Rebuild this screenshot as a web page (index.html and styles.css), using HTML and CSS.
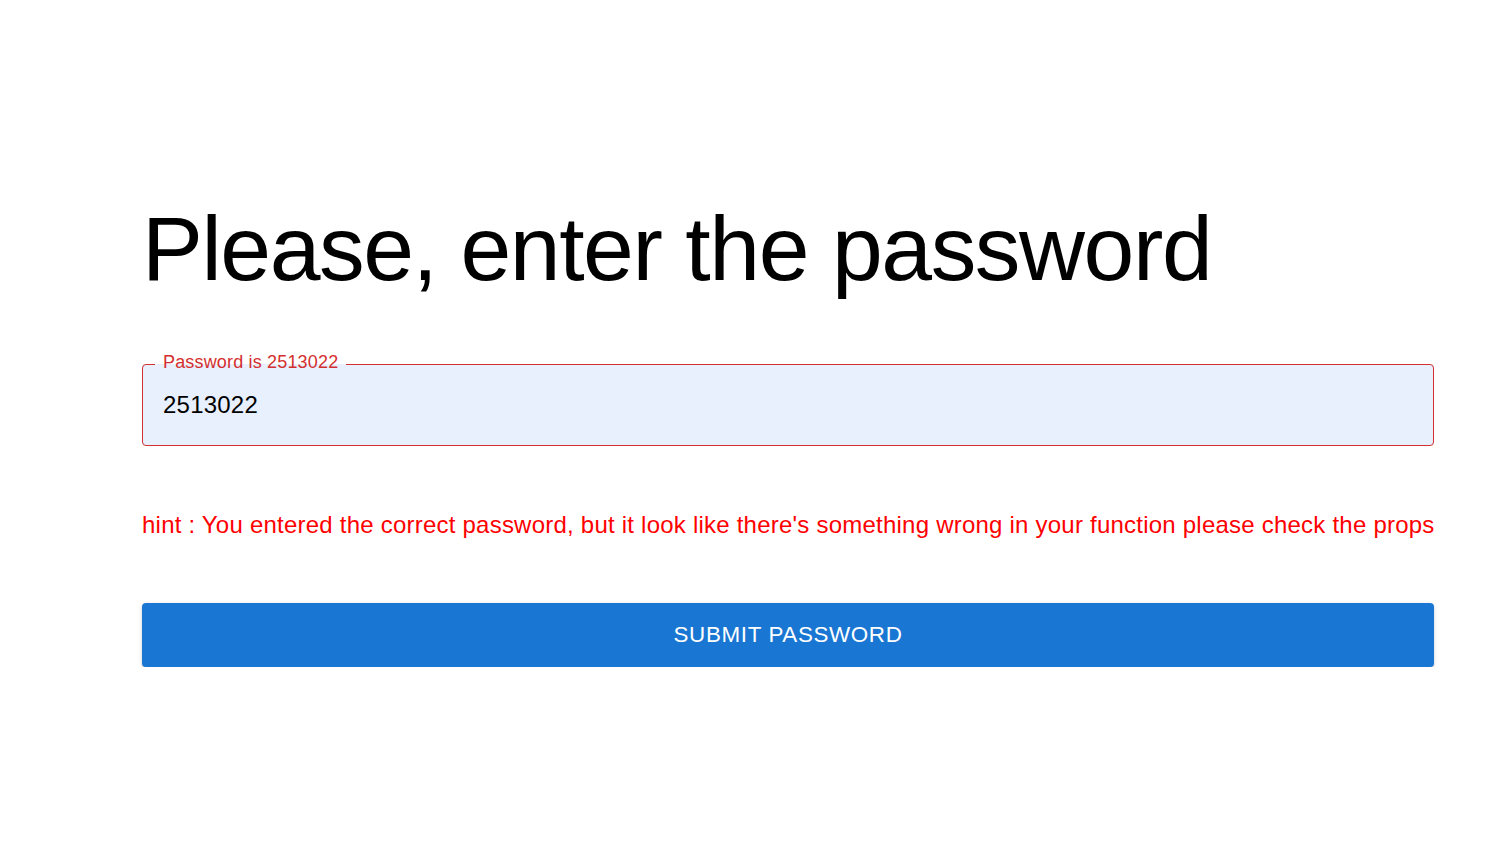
FILE: index.html
```html
<!DOCTYPE html>
<html lang="en">
<head>
<meta charset="utf-8">
<title>Password</title>
<link rel="stylesheet" href="styles.css">
</head>
<body>
<main class="page">
  <h1 class="title">Please, enter the password</h1>
  <fieldset class="field">
    <legend class="field-label">Password is 2513022</legend>
    <input class="field-input" type="text" value="2513022" aria-label="Password">
  </fieldset>
  <p class="hint">hint : You entered the correct password, but it look like there's something wrong in your function please check the props</p>
  <button class="submit" type="button">SUBMIT PASSWORD</button>
</main>
</body>
</html>
```

FILE: styles.css
```css
html, body {
  margin: 0;
  padding: 0;
  background: #ffffff;
}

body {
  font-family: "Liberation Sans", Arial, sans-serif;
  color: #000000;
}

.page {
  display: flex;
  flex-direction: column;
  padding: 195px 73px 0 142px;
}

.title {
  margin: 0;
  font-size: 91.3px;
  line-height: 107px;
  font-weight: 400;
  letter-spacing: -0.01562em;
  color: #000;
}

.field {
  margin: 50px 0 0 0;
  padding: 0 12px;
  min-width: 0;
  border: 1px solid #d32f2f;
  border-radius: 4px;
  background: #e8f0fe;
}

.field-label {
  padding: 0 8px 5px 8px;
  font-size: 18px;
  line-height: 20px;
  letter-spacing: 0.00938em;
  color: #d32f2f;
}

.field-input {
  display: block;
  box-sizing: border-box;
  width: 100%;
  height: 68px;
  margin: 0;
  padding: 0 8px 12px 8px;
  border: none;
  outline: none;
  background: transparent;
  font-family: "Liberation Sans", Arial, sans-serif;
  font-size: 24px;
  letter-spacing: 0.00938em;
  color: #000;
}

.hint {
  margin: 63px 0 0 0;
  font-size: 24px;
  line-height: 32px;
  letter-spacing: 0.00938em;
  color: #ff0000;
  white-space: nowrap;
}

.submit {
  margin-top: 62px;
  height: 64px;
  border: none;
  border-radius: 4px;
  background: #1976d2;
  color: #ffffff;
  font-family: "Liberation Sans", Arial, sans-serif;
  font-size: 22.4px;
  letter-spacing: 0.02857em;
  box-shadow: 0px 3px 1px -2px rgba(0,0,0,0.2), 0px 2px 2px 0px rgba(0,0,0,0.14), 0px 1px 5px 0px rgba(0,0,0,0.12);
  cursor: pointer;
}
```
